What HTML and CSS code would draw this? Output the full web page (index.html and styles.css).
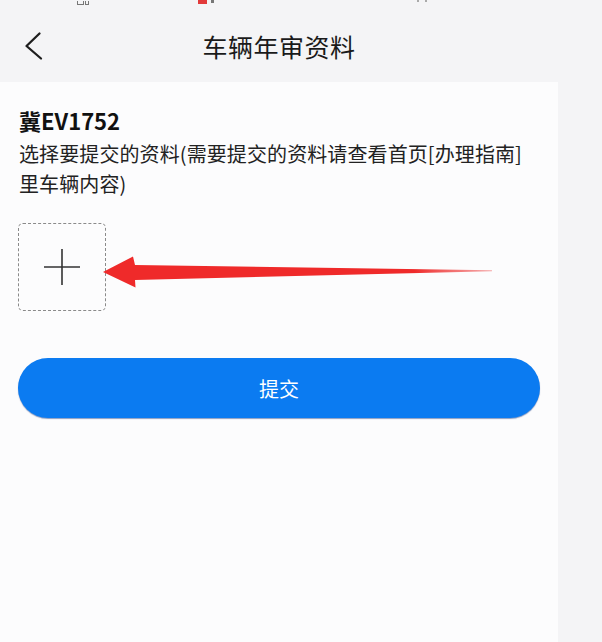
FILE: index.html
```html
<!DOCTYPE html>
<html lang="zh-CN">
<head>
<meta charset="utf-8">
<title>车辆年审资料</title>
<link rel="stylesheet" href="styles.css">
</head>
<body>
<div class="page">
  <div class="status" aria-hidden="true">
    <span class="st-glyph"></span>
    <span class="st-glyph small"></span>
    <span class="st-red"></span>
    <span class="st-gray"></span>
    <span class="st-dot"></span>
    <span class="st-dot near"></span>
  </div>
  <header class="nav">
    <div class="nav-left">
      <svg class="back" width="20" height="30" viewBox="0 0 20 30" aria-hidden="true">
        <polyline points="15.5,2.5 2.5,15 17,27.5" fill="none" stroke="#1e1e1e" stroke-width="2.3" stroke-linecap="round" stroke-linejoin="round"/>
      </svg>
    </div>
    <h1 class="title">车辆年审资料</h1>
    <div class="nav-right"></div>
  </header>
  <main class="panel">
    <div class="plate">冀EV1752</div>
    <p class="desc">选择要提交的资料(需要提交的资料请查看首页[办理指南]<br>里车辆内容)</p>
    <div class="upload">
      <svg width="38" height="38" viewBox="0 0 38 38" aria-hidden="true">
        <line x1="1" y1="19" x2="37" y2="19" stroke="#333" stroke-width="1.6"/>
        <line x1="19" y1="1" x2="19" y2="37" stroke="#333" stroke-width="1.6"/>
      </svg>
    </div>
    <button class="submit" type="button">提交</button>
    <svg class="arrow" width="395" height="42" viewBox="0 0 395 42" aria-hidden="true">
      <defs>
        <linearGradient id="fade" x1="0" y1="0" x2="1" y2="0">
          <stop offset="0" stop-color="#ef2a2a"/>
          <stop offset="0.8" stop-color="#ef2a2a"/>
          <stop offset="1" stop-color="#f07070" stop-opacity="0.6"/>
        </linearGradient>
      </defs>
      <polygon points="3,22 33,6.5 35,15 392,20.2 392,21.2 35,30 35.5,37.5" fill="url(#fade)"/>
    </svg>
  </main>
</div>
</body>
</html>
```

FILE: styles.css
```css
html, body {
  margin: 0;
  padding: 0;
}
body {
  background: #f4f4f6;
  font-family: "Noto Sans CJK SC", "Noto Sans", sans-serif;
  color: #1e1e1e;
  width: 602px;
  height: 642px;
  overflow: hidden;
}
.page {
  width: 558px;
  display: flex;
  flex-direction: column;
  height: 642px;
}
.status {
  height: 7px;
  display: flex;
  align-items: flex-start;
}
.st-glyph {
  width: 7px;
  height: 4px;
  margin-left: 77px;
  margin-top: 1px;
  border: 1px solid #777;
  border-top: none;
  box-sizing: border-box;
}
.st-glyph.small {
  width: 4px;
  margin-left: 1px;
}
.st-red {
  width: 9px;
  height: 4px;
  background: #e23a3a;
  margin-left: 109px;
}
.st-gray {
  width: 3px;
  height: 3px;
  background: #777;
  margin-left: 4px;
}
.st-dot {
  width: 2px;
  height: 2px;
  background: #aaa;
  margin-left: 203px;
}
.st-dot.near {
  margin-left: 6px;
}
.nav {
  height: 75px;
  display: grid;
  grid-template-columns: 1fr auto 1fr;
  align-items: center;
}
.nav-left {
  padding-left: 24px;
  display: flex;
  align-items: center;
  padding-top: 2px;
}
.title {
  margin: 0;
  font-size: 25px;
  font-weight: 400;
  line-height: 30px;
  color: #1a1a1a;
  letter-spacing: 0.5px;
  padding-top: 2px;
}
.panel {
  flex: 1;
  background: #fcfcfd;
  position: relative;
  padding: 23px 18px 0 18px;
  display: flex;
  flex-direction: column;
  align-items: flex-start;
}
.plate {
  font-size: 22px;
  font-weight: 700;
  line-height: 30px;
  color: #111;
  padding-left: 1px;
  margin-bottom: 4px;
}
.desc {
  margin: 0;
  font-size: 20px;
  line-height: 30px;
  color: #222;
  padding-left: 1px;
  letter-spacing: 0.1px;
}
.upload {
  margin-top: 24px;
  width: 86px;
  height: 86px;
  border: 1px dashed #8a8a8a;
  border-radius: 5px;
  display: flex;
  align-items: center;
  justify-content: center;
  box-sizing: content-box;
}
.submit {
  margin-top: 47px;
  width: 522px;
  height: 60px;
  border: none;
  border-radius: 30px;
  background: #0b7bf1;
  color: #fff;
  font-family: "Noto Sans CJK SC", "Noto Sans", sans-serif;
  font-size: 20px;
  box-shadow: 0 1px 1px rgba(0, 40, 120, 0.45);
  padding: 0;
}
.arrow {
  position: absolute;
  left: 100px;
  top: 168px;
}
```
